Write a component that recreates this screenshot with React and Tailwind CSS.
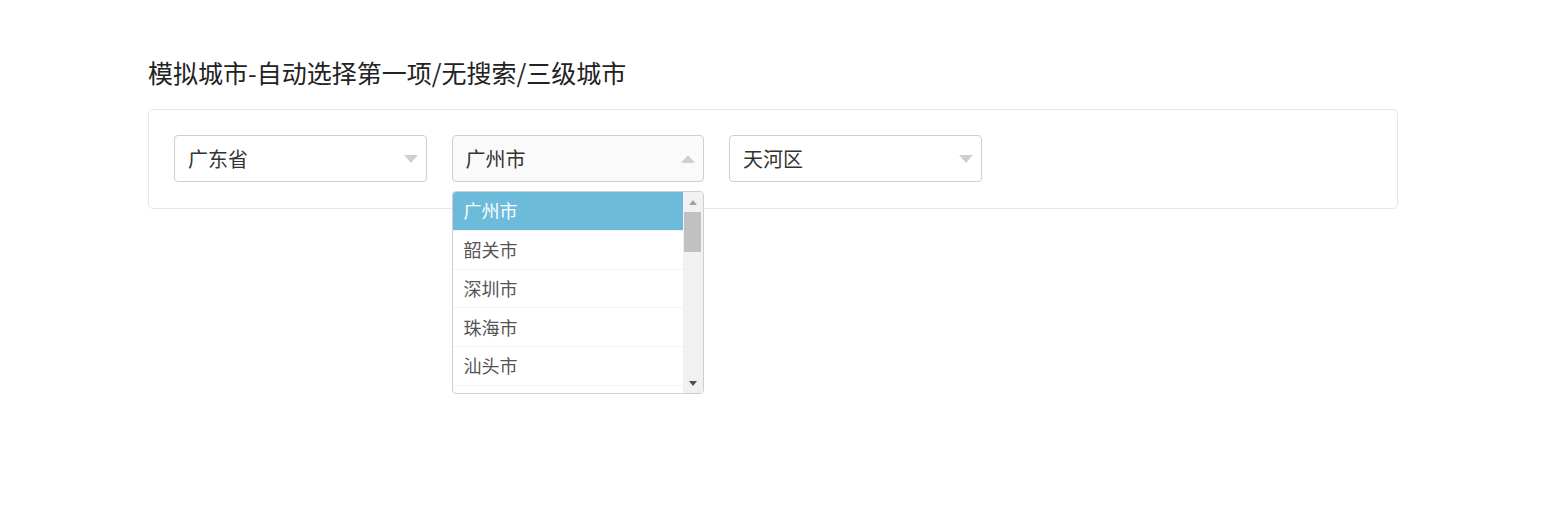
import React from 'react';

const cities = ['广州市', '韶关市', '深圳市', '珠海市', '汕头市'];

const Arrow = ({ up }) => (
  <svg width="14" height="8" viewBox="0 0 14 8" className="shrink-0">
    {up ? <path d="M0 8 L7 0 L14 8 Z" fill="#cfcfcf" /> : <path d="M0 0 L14 0 L7 8 Z" fill="#cfcfcf" />}
  </svg>
);

const Select = ({ value, open, children }) => (
  <div className="relative w-[252.5px]">
    <div
      className={`flex h-[47px] items-center justify-between rounded-[4px] border border-[#cfcfcf] pl-[13px] pr-[8px] text-[20px] text-[#333] ${open ? 'bg-[#fafafa]' : 'bg-white'}`}
    >
      <span>{value}</span>
      <Arrow up={open} />
    </div>
    {children}
  </div>
);

export default function App() {
  return (
    <div className="min-h-[509px] bg-white pl-[148px] pt-[56px]" style={{ fontFamily: '"Noto Sans CJK SC", "Noto Sans", sans-serif' }}>
      <h1 className="h-[32px] text-[25px] leading-[32px] text-[#222]">模拟城市-自动选择第一项/无搜索/三级城市</h1>
      <div className="mt-[21px] flex w-[1250px] gap-[25px] rounded-[5px] border border-[#e6e6e6] px-[25px] pb-[26px] pt-[25px]">
        <Select value="广东省" />
        <Select value="广州市" open>
          <div className="absolute left-0 top-[56px] z-10 flex h-[203px] w-[252px] overflow-hidden rounded-[4px] border border-[#cfcfcf] bg-white">
            <ul className="flex-1">
              {cities.map((c, i) => (
                <li
                  key={c}
                  className={`flex h-[38.75px] items-center border-b border-[#f3f3f3] pl-[11px] text-[18px] ${i === 0 ? 'bg-[#6dbbda] text-white' : 'text-[#555]'}`}
                >
                  {c}
                </li>
              ))}
            </ul>
            <div className="flex w-[20px] flex-col items-center bg-[#f1f1f1]">
              <div className="flex h-[20px] items-center justify-center">
                <svg width="8" height="5" viewBox="0 0 8 5"><path d="M0 5 L4 0 L8 5 Z" fill="#a3a3a3" /></svg>
              </div>
              <div className="h-[40px] w-[17px] bg-[#c1c1c1]" />
              <div className="flex-1" />
              <div className="flex h-[20px] items-center justify-center">
                <svg width="8" height="5" viewBox="0 0 8 5"><path d="M0 0 L8 0 L4 5 Z" fill="#505050" /></svg>
              </div>
            </div>
          </div>
        </Select>
        <Select value="天河区" />
      </div>
    </div>
  );
}
